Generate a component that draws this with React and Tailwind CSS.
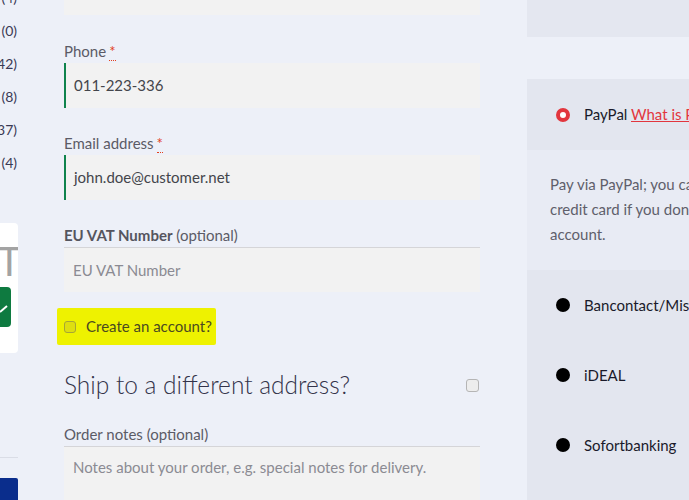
import React from "react";

const font = { fontFamily: "Lato, 'Liberation Sans', sans-serif" };

const Req = () => (
  <abbr className="ml-[3px] text-[#e2401c] no-underline border-b border-dotted border-[#e2401c] leading-none">*</abbr>
);

const Field = ({ label, value, placeholder, valid, className = "" }) => (
  <div className={className}>
    <label className="block text-[15px] leading-[24px] text-[#5b5b66]">{label}</label>
    {valid ? (
      <div className="h-[45px] flex items-center pl-[8px] bg-[#f2f2f2] border-l-2 border-[#0f834d] text-[15px] text-[#43454b]">
        {value}
      </div>
    ) : (
      <div className="h-[45px] flex items-center pl-[9px] bg-[#f2f2f2] border-t border-[#d5d5d8] text-[15px] text-[#8b8b93]">
        {placeholder}
      </div>
    )}
  </div>
);

const Sidebar = () => (
  <div className="w-[18px] shrink-0 relative overflow-hidden">
    <div className="flex flex-col items-end text-[14px] text-[#3a3a55] pr-[1px]">
      {["(4)", "(0)", "(42)", "(8)", "(37)", "(4)"].map((c, i) => (
        <div key={i} className={`h-[33px] leading-[33px] ${i === 0 ? "-mt-[19px]" : ""}`}>
          {c}
        </div>
      ))}
    </div>
    <div className="absolute left-[-40px] top-[223px] w-[58px] h-[130px] bg-white rounded-[4px]">
      <div className="absolute right-[-3px] top-[14px] text-[40px] leading-[48px] text-[#a3a3a3]">T</div>
      <div className="absolute right-[7px] top-[64px] w-[38px] h-[40px] rounded-[4px] bg-[#0e7a40] overflow-hidden">
        <svg className="absolute right-[1px] top-[18px]" width="10" height="8" viewBox="0 0 10 8">
          <path d="M0 7 L7 1" stroke="#ffffff" strokeWidth="2" fill="none" />
        </svg>
      </div>
    </div>
    <div className="absolute left-0 top-[457px] w-[18px] h-px bg-[#dadde6]" />
    <div className="absolute left-0 top-[478px] w-[18px] h-[22px] bg-[#0a2d8c] rounded-tr-[2px]" />
  </div>
);

const PayRow = ({ label }) => (
  <div className="h-[70px] flex items-center pl-[29px]">
    <span className="w-[14px] h-[14px] rounded-full bg-black" />
    <span className="ml-[14px] text-[15px] text-[#1a1a2a] whitespace-nowrap">{label}</span>
  </div>
);

export default function App() {
  return (
    <div className="w-[689px] h-[500px] overflow-hidden bg-[#edf0f8] flex" style={font}>
      <Sidebar />

      <main className="w-[416px] ml-[46px] shrink-0">
        <div className="h-[15px] bg-[#f2f2f2]" />

        <Field className="mt-[24px]" label={<>Phone<Req /></>} value="011-223-336" valid />
        <Field className="mt-[23px]" label={<>Email address<Req /></>} value="john.doe@customer.net" valid />
        <Field
          className="mt-[23px]"
          label={<><b className="font-bold text-[#55555f]">EU VAT Number</b> (optional)</>}
          placeholder="EU VAT Number"
        />

        <div className="mt-[16px] -ml-[7px] w-[159px] h-[37px] bg-[#eef200] rounded-[2px] flex items-center pl-[7px]">
          <span className="w-[12px] h-[12px] rounded-[3px] border border-[#a6a635] bg-[#dede10]" />
          <span className="ml-[10px] text-[15px] text-[#4a4a20]">Create an account?</span>
        </div>

        <div className="mt-[23px] flex items-center justify-between">
          <h3 className="text-[24.5px] leading-[34px] font-light text-[#33334a]">Ship to a different address?</h3>
          <span className="w-[13px] h-[13px] rounded-[3px] border border-[#b5b5b5] bg-[#ededed] mr-[1px]" />
        </div>

        <label className="block mt-[20px] text-[15px] leading-[24px] text-[#5b5b66]">Order notes (optional)</label>
        <div className="h-[70px] bg-[#f2f2f2] border-t border-[#d5d5d8] pl-[9px] pt-[9px] text-[15px] text-[#8b8b93] whitespace-nowrap">
          Notes about your order, e.g. special notes for delivery.
        </div>
      </main>

      <aside className="ml-[47px] w-[300px] shrink-0">
        <div className="h-[37px] bg-[#e4e7f0]" />
        <div className="mt-[42px] bg-[#e3e6ef]">
          <div className="h-[71px] flex items-center pl-[29px]">
            <span className="w-[14px] h-[14px] rounded-full border-[4px] border-[#e2363e] bg-white" />
            <span className="ml-[14px] text-[15px] text-[#1a1a2a] whitespace-nowrap">
              PayPal <a className="text-[#e2363e] underline">What is PayPal?</a>
            </span>
          </div>
          <div className="h-[120px] bg-[#e8ebf4] pl-[23px] pt-[22px] text-[15px] leading-[25px] text-[#5f5f6b]">
            <p className="whitespace-nowrap">Pay via PayPal; you can pay with your</p>
            <p className="whitespace-nowrap">credit card if you don't have a PayPal</p>
            <p>account.</p>
          </div>
          <PayRow label="Bancontact/Mister Cash" />
          <PayRow label="iDEAL" />
          <PayRow label="Sofortbanking" />
          <div className="h-[20px]" />
        </div>
      </aside>
    </div>
  );
}
